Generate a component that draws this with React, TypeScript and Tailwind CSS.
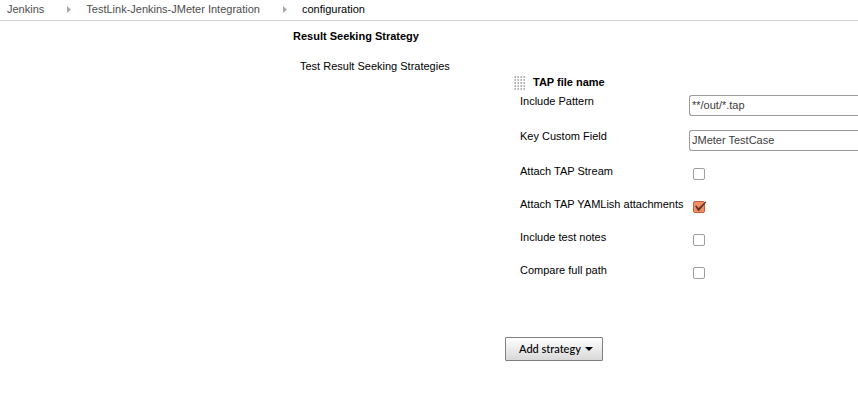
import type { ReactNode } from "react";

function Separator() {
  return (
    <svg width="4" height="7" viewBox="0 0 4 7" aria-hidden="true">
      <path d="M0 0 4 3.5 0 7Z" fill="#a8a8a8" />
    </svg>
  );
}

function Grip() {
  return (
    <svg width="11" height="14" viewBox="0 0 11 14" shapeRendering="crispEdges" aria-hidden="true">
      {[0, 3, 6, 9, 12].map((y) =>
        [0, 3, 6, 9].map((x) => (
          <g key={`${x}-${y}`}>
            <rect x={x} y={y} width="2" height="2" fill="#d6d4d2" />
            <rect x={x + 1} y={y} width="1" height="2" fill="#b4b1ae" />
          </g>
        )),
      )}
    </svg>
  );
}

function Row({ id, label, children }: { id: string; label: string; children: ReactNode }) {
  return (
    <div className="flex items-start">
      <label htmlFor={id} className="w-[169px] shrink-0 whitespace-nowrap">
        {label}
      </label>
      {children}
    </div>
  );
}

function TextRow({ id, label, value }: { id: string; label: string; value: string }) {
  return (
    <Row id={id} label={label}>
      <div className="min-w-0 flex-1 pt-[2px] pb-3">
        <input
          id={id}
          type="text"
          defaultValue={value}
          className="block h-[21px] w-full rounded-l-[3px] border border-r-0 border-[#9c9a98] bg-white px-[2px] pb-px text-[#3c3c3c] outline-none"
        />
      </div>
    </Row>
  );
}

function CheckRow({ id, label, checked = false }: { id: string; label: string; checked?: boolean }) {
  return (
    <Row id={id} label={label}>
      <div className="px-1 pt-[5px] pb-4">
        <div className="relative h-3 w-3">
          <input
            id={id}
            type="checkbox"
            defaultChecked={checked}
            className="peer block h-3 w-3 appearance-none rounded-[2px] border border-[#a09e9c] bg-white checked:border-[#c4603a] checked:bg-[#f58e66]"
          />
          <svg
            width="14"
            height="12"
            viewBox="0 0 14 12"
            className="pointer-events-none absolute top-0 left-0 hidden peer-checked:block"
            aria-hidden="true"
          >
            <path d="M2 5 3.5 4.5 5.5 7 12.5 0.5 13.5 1 6 10 5 10Z" fill="#5e3a2c" />
          </svg>
        </div>
      </div>
    </Row>
  );
}

export default function App() {
  return (
    <div className="min-h-screen overflow-hidden bg-white font-['Liberation_Sans',Arial,sans-serif] text-[11px] leading-4 text-black">
      <nav aria-label="Breadcrumb" className="flex border-b border-[#d3d7cf] px-[7px] pt-px pb-[3px] whitespace-nowrap">
        <ol className="flex items-center gap-[15px]">
          <li className="flex items-center gap-[23px]">
            <a href="#jenkins" className="text-[#4d4d4d]">Jenkins</a>
            <Separator />
          </li>
          <li className="flex items-center gap-[23px]">
            <a href="#project" className="text-[#4d4d4d]">TestLink-Jenkins-JMeter Integration</a>
            <Separator />
          </li>
          <li>
            <a href="#configuration" aria-current="page">configuration</a>
          </li>
        </ol>
      </nav>
      <main className="pt-[7px] pl-[293px]">
        <h2 className="font-bold">Result Seeking Strategy</h2>
        <h3 className="mt-[14px] pl-[7px]">Test Result Seeking Strategies</h3>
        <form className="pl-[212px]">
          <div className="flex items-end gap-2 pl-[9px]">
            <Grip />
            <h4 className="font-bold">TAP file name</h4>
          </div>
          <div className="pt-[3px] pl-[15px]">
            <TextRow id="include-pattern" label="Include Pattern" value="**/out/*.tap" />
            <TextRow id="custom-field" label="Key Custom Field" value="JMeter TestCase" />
            <CheckRow id="attach-stream" label="Attach TAP Stream" />
            <CheckRow id="attach-yaml" label="Attach TAP YAMLish attachments" checked />
            <CheckRow id="test-notes" label="Include test notes" />
            <CheckRow id="full-path" label="Compare full path" />
          </div>
          <button
            type="button"
            className="mt-[42px] flex h-6 w-[98px] items-center justify-between rounded-[1px] border border-[#808080] bg-linear-to-b from-white to-[#d8d8d8] pr-[9px] pl-[13px] font-[Lato,'Open_Sans',sans-serif] font-medium whitespace-nowrap"
          >
            Add strategy
            <svg width="8" height="4" viewBox="0 0 8 4" aria-hidden="true">
              <path d="M0 0H8L4 4Z" fill="#000" />
            </svg>
          </button>
        </form>
      </main>
    </div>
  );
}
